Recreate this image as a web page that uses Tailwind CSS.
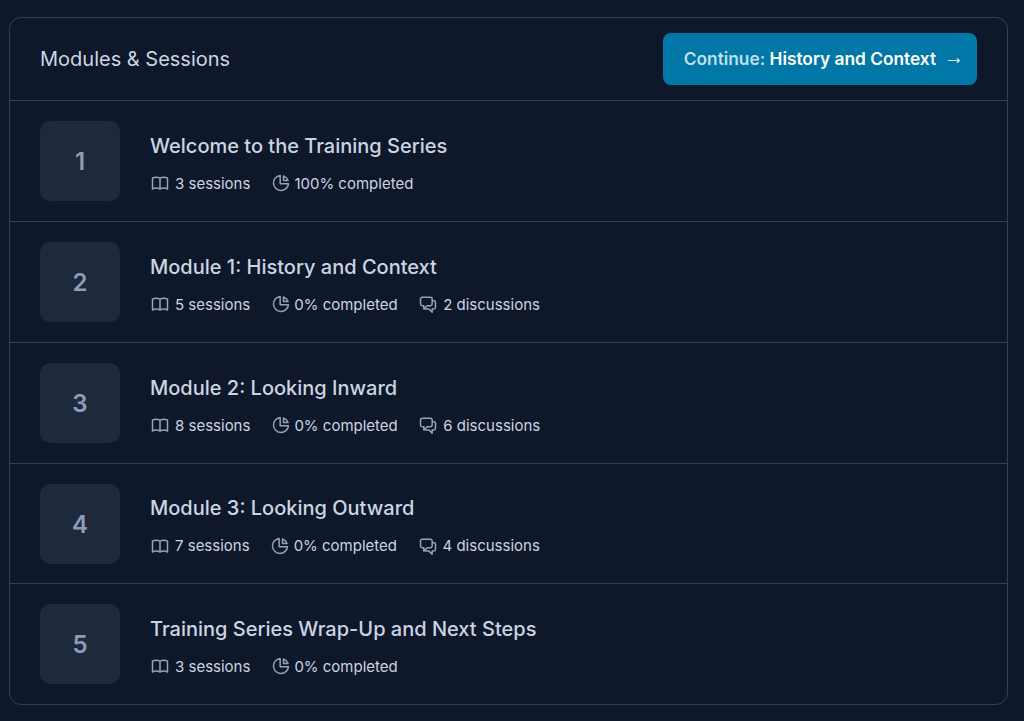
<!DOCTYPE html>
<html lang="en">

<head>
    <meta charset="UTF-8">
    <title>Modules &amp; Sessions</title>
    <script src="https://cdn.jsdelivr.net/npm/@tailwindcss/browser@4"></script>
</head>

<body class="bg-[#0f172a] font-['Inter',sans-serif]">
    <div class="pt-[17px] pl-[9px] pr-[16px]">
        <div class="border border-[#334155] rounded-xl">
            <div class="h-[82.4px] pl-[30px] pr-[30px] flex items-center justify-between">
                <h2 class="text-[20px] text-[#cbd5e1]">Modules &amp; Sessions</h2>
                <a class="h-[52px] pl-[21px] pr-[13px] bg-[#0077a6] rounded-lg flex items-center gap-[8px] text-[17.3px] font-semibold text-[#bfdfee]">
                    <span>Continue: <span class="text-white">History and Context</span></span>
                    <span class="mb-[4px] text-white text-[20px] font-normal font-['Liberation_Sans',sans-serif]">→</span>
                </a>
            </div>
            <div id="modules"></div>
        </div>
    </div>
</body>
<script>
    let modules = [
        { title: 'Welcome to the Training Series', sessions: 3, done: 100 },
        { title: 'Module 1: History and Context', sessions: 5, done: 0, discussions: 2 },
        { title: 'Module 2: Looking Inward', sessions: 8, done: 0, discussions: 6 },
        { title: 'Module 3: Looking Outward', sessions: 7, done: 0, discussions: 4 },
        { title: 'Training Series Wrap-Up and Next Steps', sessions: 3, done: 0 },
    ]

    let htmlstring = ''

    modules.forEach((m, i) => {
        let chat = ''
        if (m.discussions) {
            chat = `
                <span class="flex items-center gap-[5px]">
                    <svg class="w-5 h-5 mb-[2px] text-[#94a3b8]" fill="none" viewBox="0 0 24 24" stroke="currentColor" stroke-width="1.8" stroke-linecap="round" stroke-linejoin="round"><path d="M17 8h2a2 2 0 012 2v6a2 2 0 01-2 2h-2v4l-4-4H9a1.994 1.994 0 01-1.414-.586m0 0L11 14h4a2 2 0 002-2V6a2 2 0 00-2-2H5a2 2 0 00-2 2v6a2 2 0 002 2h2v4l.586-.586z"/></svg>
                    ${m.discussions} discussions
                </span>`
        }

        htmlstring += `
        <div class="border-t border-[#334155] h-[120.75px] px-[30px] flex items-center gap-[30px]">
            <div class="w-20 h-20 pt-[2px] rounded-[10px] bg-[#1e293b] flex items-center justify-center text-[24px] font-semibold text-[#8b9dbd]">${i + 1}</div>
            <div class="pt-[4px]">
                <h3 class="text-[20px] font-medium text-[#cbd5e1]">${m.title}</h3>
                <div class="mt-[12px] flex items-center gap-[20.5px] text-[15px] text-[#cbd5e1]">
                    <span class="flex items-center gap-[5px]">
                        <svg class="w-5 h-5 mb-[2px] text-[#94a3b8]" fill="none" viewBox="0 0 24 24" stroke="currentColor" stroke-width="1.8" stroke-linecap="round" stroke-linejoin="round"><path d="M12 6.253v13m0-13C10.832 5.477 9.246 5 7.5 5S4.168 5.477 3 6.253v13C4.168 18.477 5.754 18 7.5 18s3.332.477 4.5 1.253m0-13C13.168 5.477 14.754 5 16.5 5c1.747 0 3.332.477 4.5 1.253v13C19.832 18.477 18.247 18 16.5 18c-1.746 0-3.332.477-4.5 1.253"/></svg>
                        ${m.sessions} sessions
                    </span>
                    <span class="flex items-center gap-[3.5px]">
                        <svg class="w-5 h-5 mb-[2px] text-[#94a3b8]" fill="none" viewBox="0 0 24 24" stroke="currentColor" stroke-width="1.8" stroke-linecap="round" stroke-linejoin="round"><path d="M11 3.055A9.001 9.001 0 1020.945 13H11V3.055z"/><path d="M20.488 9H15V3.512A9.025 9.025 0 0120.488 9z"/></svg>
                        ${m.done}% completed
                    </span>${chat}
                </div>
            </div>
        </div>`
    })

    document.getElementById('modules').innerHTML = htmlstring
</script>

</html>
